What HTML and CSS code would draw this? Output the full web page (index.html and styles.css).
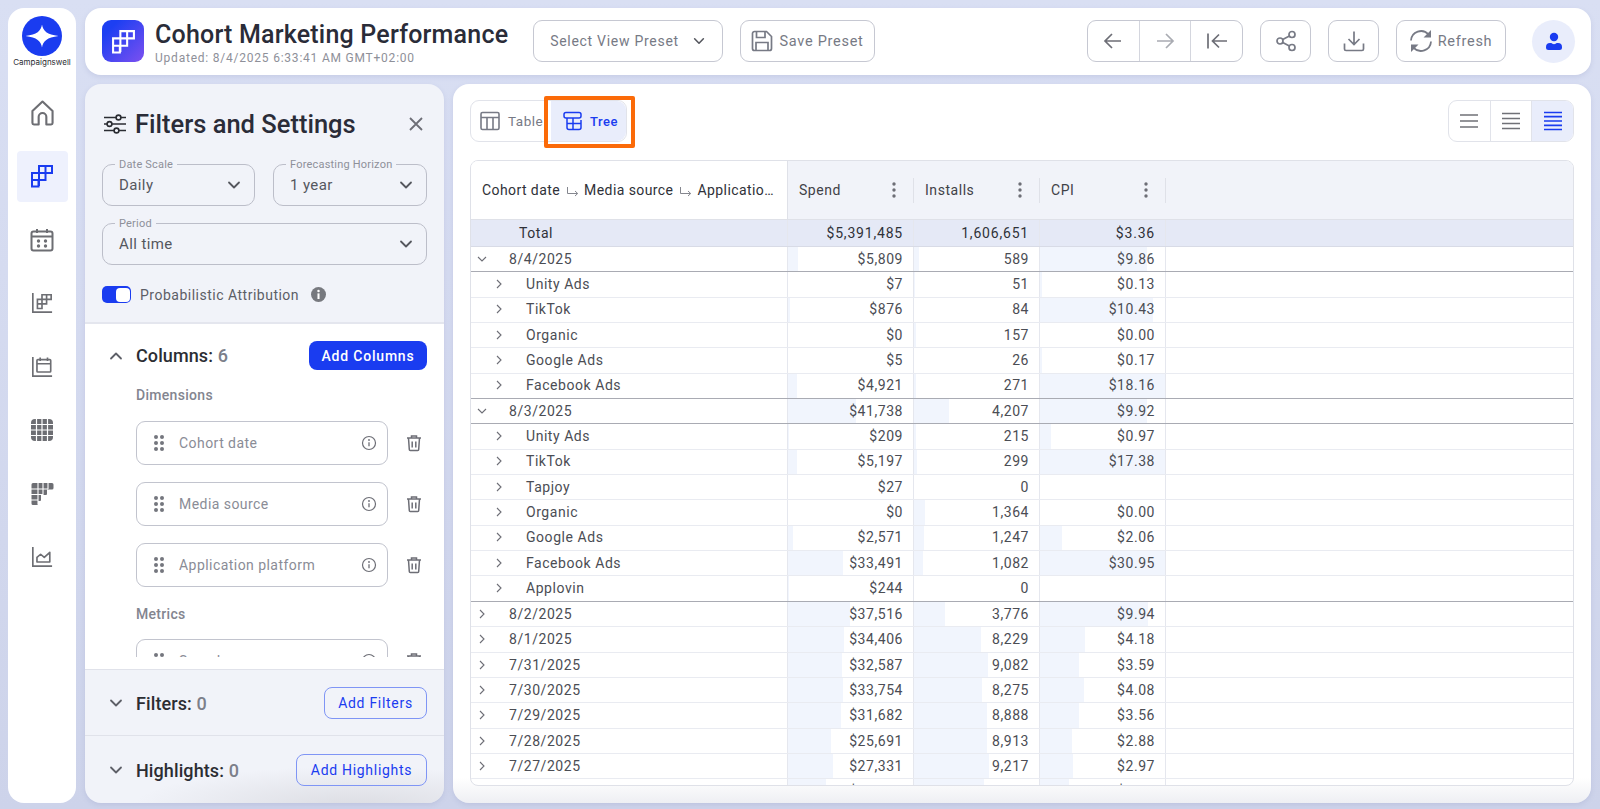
FILE: index.html
```html
<!DOCTYPE html>
<html lang="en">
<head>
<meta charset="utf-8">
<title>Cohort Marketing Performance</title>
<link rel="stylesheet" href="styles.css">
</head>
<body>
<svg class="defs" width="0" height="0" aria-hidden="true">
  <symbol id="stairs" viewBox="0 0 24 24"><path d="M9 2h13v7h-6.500v7H2V9h7zM15.500 2v7M9 9h6.500M9 9v7M2 16h6.500v6.500H2zM9 16v6" fill="none" stroke="currentColor" stroke-width="2"/></symbol>
  <symbol id="chev-d" viewBox="0 0 16 16"><path d="M3 5.500l5 5 5-5" fill="none" stroke="currentColor" stroke-width="1.800" stroke-linecap="round" stroke-linejoin="round"/></symbol>
  <symbol id="chev-r" viewBox="0 0 12 12"><path d="M4 2l4 4-4 4" fill="none" stroke="currentColor" stroke-width="1.100"/></symbol>
  <symbol id="chev-o" viewBox="0 0 12 12"><path d="M2 4l4 4 4-4" fill="none" stroke="currentColor" stroke-width="1.100"/></symbol>
  <symbol id="grip" viewBox="0 0 12 18"><g fill="currentColor"><circle cx="3" cy="3" r="2"/><circle cx="9" cy="3" r="2"/><circle cx="3" cy="9" r="2"/><circle cx="9" cy="9" r="2"/><circle cx="3" cy="15" r="2"/><circle cx="9" cy="15" r="2"/></g></symbol>
  <symbol id="info" viewBox="0 0 16 16"><circle cx="8" cy="8" r="6.500" fill="none" stroke="currentColor" stroke-width="1.200"/><path d="M8 7.200v4" stroke="currentColor" stroke-width="1.300"/><circle cx="8" cy="5" r=".9" fill="currentColor"/></symbol>
  <symbol id="trash" viewBox="0 0 18 18"><path d="M2 4h14M6.500 4V2h5v2M3.500 4l.8 11.500a1 1 0 0 0 1 1h7.400a1 1 0 0 0 1-1L14.500 4M7.200 7.500v6M10.800 7.500v6" fill="none" stroke="currentColor" stroke-width="1.500"/></symbol>
  <symbol id="kebab" viewBox="0 0 4 16"><g fill="currentColor"><circle cx="2" cy="2" r="1.700"/><circle cx="2" cy="8" r="1.700"/><circle cx="2" cy="14" r="1.700"/></g></symbol>
  <symbol id="turn" viewBox="0 0 14 12"><path d="M1.500 1v6.500h10M9 5l2.700 2.500L9 10" fill="none" stroke="currentColor" stroke-width="1"/></symbol>
</svg>
<div class="app">
  <nav class="rail">
    <div class="brand">
      <svg class="logo" viewBox="0 0 40 40"><circle cx="20" cy="20" r="20" fill="#1a3cf0"/><path d="M20 8.500C21 15 25 18.500 36.500 20 25 21.500 21 25 20 31.500 19 25 15 21.500 3.500 20 15 18.500 19 15 20 8.500z" fill="#fff"/></svg>
      <span class="brand-name">Campaignswell</span>
    </div>
    <ul class="rail-list">
      <li class="rail-item"><svg class="ic-home" viewBox="0 0 24 27"><path d="M1.500 11.500L12 1.500l10.500 10V24a1.500 1.500 0 0 1-1.500 1.500h-5v-8a4 4 0 0 0-8 0v8H3A1.500 1.500 0 0 1 1.500 24z" fill="none" stroke="currentColor" stroke-width="2.200" stroke-linejoin="round"/></svg></li>
      <li class="rail-item is-active"><svg viewBox="0 0 24 24"><use href="#stairs"/></svg></li>
      <li class="rail-item"><svg viewBox="0 0 24 24"><rect x="1.500" y="3.500" width="21" height="19" rx="2" fill="none" stroke="currentColor" stroke-width="2"/><path d="M1.500 8.500h21M7 1v4M17 1v4" stroke="currentColor" stroke-width="2"/><g fill="currentColor"><circle cx="8.500" cy="13" r="1.700"/><circle cx="15.500" cy="13" r="1.700"/><circle cx="8.500" cy="18" r="1.700"/><circle cx="15.500" cy="18" r="1.700"/></g></svg></li>
      <li class="rail-item"><svg class="ic-axis" viewBox="0 0 24 24"><path d="M2 1v21h21" fill="none" stroke="currentColor" stroke-width="1.800"/><path d="M12 3h10v5h-5v5H7V8h5zM17 3v5M12 8h5M12 8v5M7 13h5v5H7z" fill="none" stroke="currentColor" stroke-width="1.800"/></svg></li>
      <li class="rail-item"><svg class="ic-axis" viewBox="0 0 24 24"><path d="M2 1v21h21" fill="none" stroke="currentColor" stroke-width="1.800"/><rect x="6.500" y="4" width="15" height="13.500" rx="1" fill="none" stroke="currentColor" stroke-width="1.800"/><path d="M6.500 8.500h15M10 1.500v4M18 1.500v4" stroke="currentColor" stroke-width="1.800"/></svg></li>
      <li class="rail-item"><svg viewBox="0 0 24 24"><rect x="1" y="1" width="22" height="22" rx="4" fill="currentColor"/><path d="M1 6.500h22M1 12h22M1 17.500h22M6.500 1v22M12 1v22M17.500 1v22" stroke="#fff" stroke-width="1.200"/></svg></li>
      <li class="rail-item"><svg viewBox="0 0 24 24"><path d="M3 1h19a1.500 1.500 0 0 1 1.500 1.500V6a1.500 1.500 0 0 1-1.500 1.500h-5V12a1 1 0 0 1-1 1h-5v5a1 1 0 0 1-1 1H8v2.500A1.500 1.500 0 0 1 6.500 23H3a1.500 1.500 0 0 1-1.500-1.500v-19A1.500 1.500 0 0 1 3 1z" fill="currentColor"/><path d="M1 7h17M1 12.500h12M1 18h7M8 1v21M13 1v12M18 1v6" stroke="#fff" stroke-width="1.100"/></svg></li>
      <li class="rail-item"><svg class="ic-axis" viewBox="0 0 24 24"><path d="M2 1v21h21" fill="none" stroke="currentColor" stroke-width="1.800"/><path d="M6.500 17.500v-5l4-3.500 4 3.500 6-5.500v10.500z" fill="none" stroke="currentColor" stroke-width="1.800" stroke-linejoin="round"/></svg></li>
    </ul>
  </nav>

  <div class="main">
    <header class="topbar">
      <div class="app-icon"><svg viewBox="0 0 24 24"><use href="#stairs"/></svg></div>
      <div class="title-block">
        <h1 class="title">Cohort Marketing Performance</h1>
        <p class="updated">Updated: 8/4/2025 6:33:41 AM GMT+02:00</p>
      </div>
      <button class="btn btn-select">Select View Preset<svg class="ic-chev" viewBox="0 0 16 16"><use href="#chev-d"/></svg></button>
      <button class="btn btn-save"><svg class="ic-22" viewBox="0 0 22 22"><path d="M1.500 3.500a2 2 0 0 1 2-2h12l5 5v12a2 2 0 0 1-2 2h-15a2 2 0 0 1-2-2zM5.500 1.500v6h8.500v-6M5 20.500v-8h12v8" fill="none" stroke="currentColor" stroke-width="1.700"/></svg>Save Preset</button>
      <div class="spacer"></div>
      <div class="btn-group">
        <button class="seg"><svg class="ic-22" viewBox="0 0 22 22"><path d="M19 11H3M10 4l-7 7 7 7" fill="none" stroke="currentColor" stroke-width="1.700"/></svg></button>
        <button class="seg is-faint"><svg class="ic-22" viewBox="0 0 22 22"><path d="M3 11h16M12 4l7 7-7 7" fill="none" stroke="currentColor" stroke-width="1.700"/></svg></button>
        <button class="seg"><svg class="ic-22" viewBox="0 0 22 22"><path d="M21 11H6.500M13 4.500L6.500 11l6.500 6.500M2 3.500v15" fill="none" stroke="currentColor" stroke-width="1.700"/></svg></button>
      </div>
      <button class="btn btn-icon"><svg class="ic-22" viewBox="0 0 22 22"><circle cx="17" cy="4.500" r="3" fill="none" stroke="currentColor" stroke-width="1.700"/><circle cx="5" cy="11" r="3" fill="none" stroke="currentColor" stroke-width="1.700"/><circle cx="17" cy="17.500" r="3" fill="none" stroke="currentColor" stroke-width="1.700"/><path d="M7.700 9.500l6.700-3.600M7.700 12.500l6.700 3.600" stroke="currentColor" stroke-width="1.700"/></svg></button>
      <button class="btn btn-icon"><svg class="ic-22" viewBox="0 0 22 22"><path d="M11 1.500V14M5.500 9l5.500 5.500L16.500 9M1.500 13.500V19a1.500 1.500 0 0 0 1.500 1.500h16a1.500 1.500 0 0 0 1.500-1.500v-5.500" fill="none" stroke="currentColor" stroke-width="1.700"/></svg></button>
      <button class="btn btn-refresh"><svg class="ic-22" viewBox="0 0 22 22"><path d="M1 10.500A10 10 0 0 1 18.500 4.500M21 11.500A10 10 0 0 1 3.500 17.500" fill="none" stroke="currentColor" stroke-width="1.800"/><path d="M21 0v7.500h-7.500zM1 22v-7.500h7.500z" fill="currentColor"/></svg>Refresh</button>
      <div class="avatar"><svg viewBox="0 0 18 18"><circle cx="9" cy="4.500" r="4.200" fill="#1a3cf0"/><path d="M1 14.500a4 4 0 0 1 4-4h1.500c.7 1.500 4.300 1.500 5 0H13a4 4 0 0 1 4 4V15a2.500 2.500 0 0 1-2.500 2.500h-11A2.500 2.500 0 0 1 1 15z" fill="#1a3cf0"/></svg></div>
    </header>

    <div class="panels">
      <aside class="settings">
        <section class="settings-top">
          <div class="settings-head">
            <svg class="ic-sliders" viewBox="0 0 22 20"><path d="M0 3.500h12M17 3.500h5M0 10h3M8 10h14M0 16.500h10M15 16.500h7" stroke="currentColor" stroke-width="1.600"/><g fill="none" stroke="currentColor" stroke-width="1.600"><circle cx="14.500" cy="3.500" r="2.400"/><circle cx="5.500" cy="10" r="2.400"/><circle cx="12.500" cy="16.500" r="2.400"/></g></svg>
            <h2 class="settings-title">Filters and Settings</h2>
            <svg class="ic-close" viewBox="0 0 14 14"><path d="M1 1l12 12M13 1L1 13" stroke="currentColor" stroke-width="1.800"/></svg>
          </div>
          <div class="select-row">
            <div class="select"><span class="select-label">Date Scale</span>Daily<svg class="ic-chev" viewBox="0 0 16 16"><use href="#chev-d"/></svg></div>
            <div class="select"><span class="select-label">Forecasting Horizon</span>1 year<svg class="ic-chev" viewBox="0 0 16 16"><use href="#chev-d"/></svg></div>
          </div>
          <div class="select"><span class="select-label">Period</span>All time<svg class="ic-chev" viewBox="0 0 16 16"><use href="#chev-d"/></svg></div>
          <div class="switch-row">
            <span class="switch"><span class="switch-knob"></span></span>
            <span class="switch-label">Probabilistic Attribution</span>
            <svg class="ic-info-fill" viewBox="0 0 16 16"><circle cx="8" cy="8" r="8" fill="#77797f"/><rect x="6.900" y="6.800" width="2.200" height="6" fill="#fff"/><circle cx="8" cy="4.300" r="1.300" fill="#fff"/></svg>
          </div>
        </section>

        <section class="columns">
          <div class="acc-head">
            <svg class="ic-acc up" viewBox="0 0 16 16"><use href="#chev-d"/></svg>
            <span class="acc-title">Columns: <b>6</b></span>
            <button class="btn-primary">Add Columns</button>
          </div>
          <div class="columns-list">
            <h3 class="group-title">Dimensions</h3>
            <div class="field-row"><div class="field"><svg class="ic-grip"><use href="#grip"/></svg><span class="field-name">Cohort date</span><svg class="ic-info"><use href="#info"/></svg></div><svg class="ic-trash"><use href="#trash"/></svg></div>
            <div class="field-row"><div class="field"><svg class="ic-grip"><use href="#grip"/></svg><span class="field-name">Media source</span><svg class="ic-info"><use href="#info"/></svg></div><svg class="ic-trash"><use href="#trash"/></svg></div>
            <div class="field-row"><div class="field"><svg class="ic-grip"><use href="#grip"/></svg><span class="field-name">Application platform</span><svg class="ic-info"><use href="#info"/></svg></div><svg class="ic-trash"><use href="#trash"/></svg></div>
            <h3 class="group-title group-metrics">Metrics</h3>
            <div class="field-row"><div class="field"><svg class="ic-grip"><use href="#grip"/></svg><span class="field-name">Spend</span><svg class="ic-info"><use href="#info"/></svg></div><svg class="ic-trash"><use href="#trash"/></svg></div>
          </div>
        </section>

        <section class="acc-section">
          <svg class="ic-acc" viewBox="0 0 16 16"><use href="#chev-d"/></svg>
          <span class="acc-title">Filters: <b>0</b></span>
          <button class="btn-outline">Add Filters</button>
        </section>
        <section class="acc-section">
          <svg class="ic-acc" viewBox="0 0 16 16"><use href="#chev-d"/></svg>
          <span class="acc-title">Highlights: <b>0</b></span>
          <button class="btn-outline btn-wide">Add Highlights</button>
        </section>
      </aside>

      <main class="report">
        <div class="toolbar">
          <div class="view-toggle">
            <button class="view-btn"><svg class="ic-table" viewBox="0 0 20 20"><rect x="1" y="1.500" width="18" height="17" rx="1.500" fill="none" stroke="currentColor" stroke-width="1.600"/><path d="M1 6.500h18M7 6.500v12M13 6.500v12" stroke="currentColor" stroke-width="1.600"/></svg>Table</button>
            <button class="view-btn is-active"><svg class="ic-table" viewBox="0 0 20 20"><g fill="none" stroke="currentColor" stroke-width="1.500"><rect x="1" y="1.500" width="17" height="5.500" rx="2"/><path d="M4 7v9.500a2 2 0 0 0 2 2h10a2 2 0 0 0 2-2V9M4 12.500h14M10 7v11.500"/></g></svg>Tree</button>
            <span class="callout"></span>
          </div>
          <div class="density">
            <button class="density-btn"><svg viewBox="0 0 20 16"><path d="M1 2h18M1 8h18M1 14h18" stroke="currentColor" stroke-width="1.700"/></svg></button>
            <button class="density-btn"><svg viewBox="0 0 20 18"><path d="M1 1.500h18M1 6.500h18M1 11.500h18M1 16.500h18" stroke="currentColor" stroke-width="1.700"/></svg></button>
            <button class="density-btn is-active"><svg viewBox="0 0 20 20"><path d="M1 1.500h18M1 5.700h18M1 10h18M1 14.300h18M1 18.500h18" stroke="currentColor" stroke-width="1.700"/></svg></button>
          </div>
        </div>

        <div class="grid">
          <div class="row row-head">
            <div class="cell head-group"><span class="crumb">Cohort date</span><svg class="ic-turn"><use href="#turn"/></svg><span class="crumb">Media source</span><svg class="ic-turn"><use href="#turn"/></svg><span class="crumb crumb-last">Application platform</span></div>
            <div class="cell head-col"><span>Spend</span><svg class="ic-kebab"><use href="#kebab"/></svg></div>
            <div class="cell head-col"><span>Installs</span><svg class="ic-kebab"><use href="#kebab"/></svg></div>
            <div class="cell head-col"><span>CPI</span><svg class="ic-kebab"><use href="#kebab"/></svg></div>
            <div class="cell head-fill"></div>
          </div>
          <div class="row row-total">
            <div class="cell name">Total</div>
            <div class="cell num">$5,391,485</div><div class="cell num">1,606,651</div><div class="cell num">$3.36</div><div class="cell"></div>
          </div>

          <div class="row lvl0 open"><div class="cell name"><svg class="tw"><use href="#chev-o"/></svg>8/4/2025</div><div class="cell num bar" style="background-size:10px 100%">$5,809</div><div class="cell num bar" style="background-size:5px 100%">589</div><div class="cell num bar" style="background-size:107px 100%">$9.86</div><div class="cell"></div></div>
          <div class="row lvl1"><div class="cell name"><svg class="tw"><use href="#chev-r"/></svg>Unity Ads</div><div class="cell num">$7</div><div class="cell num bar" style="background-size:1px 100%">51</div><div class="cell num bar" style="background-size:2px 100%">$0.13</div><div class="cell"></div></div>
          <div class="row lvl1"><div class="cell name"><svg class="tw"><use href="#chev-r"/></svg>TikTok</div><div class="cell num bar" style="background-size:2px 100%">$876</div><div class="cell num">84</div><div class="cell num bar" style="background-size:113px 100%">$10.43</div><div class="cell"></div></div>
          <div class="row lvl1"><div class="cell name"><svg class="tw"><use href="#chev-r"/></svg>Organic</div><div class="cell num">$0</div><div class="cell num bar" style="background-size:2px 100%">157</div><div class="cell num">$0.00</div><div class="cell"></div></div>
          <div class="row lvl1"><div class="cell name"><svg class="tw"><use href="#chev-r"/></svg>Google Ads</div><div class="cell num">$5</div><div class="cell num">26</div><div class="cell num bar" style="background-size:2px 100%">$0.17</div><div class="cell"></div></div>
          <div class="row lvl1 last"><div class="cell name"><svg class="tw"><use href="#chev-r"/></svg>Facebook Ads</div><div class="cell num bar" style="background-size:9px 100%">$4,921</div><div class="cell num bar" style="background-size:2px 100%">271</div><div class="cell num bar" style="background-size:126px 100%">$18.16</div><div class="cell"></div></div>

          <div class="row lvl0 open"><div class="cell name"><svg class="tw"><use href="#chev-o"/></svg>8/3/2025</div><div class="cell num bar" style="background-size:68px 100%">$41,738</div><div class="cell num bar" style="background-size:35px 100%">4,207</div><div class="cell num bar" style="background-size:107px 100%">$9.92</div><div class="cell"></div></div>
          <div class="row lvl1"><div class="cell name"><svg class="tw"><use href="#chev-r"/></svg>Unity Ads</div><div class="cell num bar" style="background-size:1px 100%">$209</div><div class="cell num bar" style="background-size:2px 100%">215</div><div class="cell num bar" style="background-size:11px 100%">$0.97</div><div class="cell"></div></div>
          <div class="row lvl1"><div class="cell name"><svg class="tw"><use href="#chev-r"/></svg>TikTok</div><div class="cell num bar" style="background-size:9px 100%">$5,197</div><div class="cell num bar" style="background-size:3px 100%">299</div><div class="cell num bar" style="background-size:126px 100%">$17.38</div><div class="cell"></div></div>
          <div class="row lvl1"><div class="cell name"><svg class="tw"><use href="#chev-r"/></svg>Tapjoy</div><div class="cell num">$27</div><div class="cell num">0</div><div class="cell num"></div><div class="cell"></div></div>
          <div class="row lvl1"><div class="cell name"><svg class="tw"><use href="#chev-r"/></svg>Organic</div><div class="cell num">$0</div><div class="cell num bar" style="background-size:11px 100%">1,364</div><div class="cell num">$0.00</div><div class="cell"></div></div>
          <div class="row lvl1"><div class="cell name"><svg class="tw"><use href="#chev-r"/></svg>Google Ads</div><div class="cell num bar" style="background-size:5px 100%">$2,571</div><div class="cell num bar" style="background-size:10px 100%">1,247</div><div class="cell num bar" style="background-size:22px 100%">$2.06</div><div class="cell"></div></div>
          <div class="row lvl1"><div class="cell name"><svg class="tw"><use href="#chev-r"/></svg>Facebook Ads</div><div class="cell num bar" style="background-size:55px 100%">$33,491</div><div class="cell num bar" style="background-size:9px 100%">1,082</div><div class="cell num bar" style="background-size:126px 100%">$30.95</div><div class="cell"></div></div>
          <div class="row lvl1 last"><div class="cell name"><svg class="tw"><use href="#chev-r"/></svg>Applovin</div><div class="cell num bar" style="background-size:1px 100%">$244</div><div class="cell num">0</div><div class="cell num"></div><div class="cell"></div></div>

          <div class="row lvl0"><div class="cell name"><svg class="tw"><use href="#chev-r"/></svg>8/2/2025</div><div class="cell num bar" style="background-size:62px 100%">$37,516</div><div class="cell num bar" style="background-size:31px 100%">3,776</div><div class="cell num bar" style="background-size:108px 100%">$9.94</div><div class="cell"></div></div>
          <div class="row lvl0"><div class="cell name"><svg class="tw"><use href="#chev-r"/></svg>8/1/2025</div><div class="cell num bar" style="background-size:56px 100%">$34,406</div><div class="cell num bar" style="background-size:67px 100%">8,229</div><div class="cell num bar" style="background-size:45px 100%">$4.18</div><div class="cell"></div></div>
          <div class="row lvl0"><div class="cell name"><svg class="tw"><use href="#chev-r"/></svg>7/31/2025</div><div class="cell num bar" style="background-size:54px 100%">$32,587</div><div class="cell num bar" style="background-size:74px 100%">9,082</div><div class="cell num bar" style="background-size:39px 100%">$3.59</div><div class="cell"></div></div>
          <div class="row lvl0"><div class="cell name"><svg class="tw"><use href="#chev-r"/></svg>7/30/2025</div><div class="cell num bar" style="background-size:55px 100%">$33,754</div><div class="cell num bar" style="background-size:68px 100%">8,275</div><div class="cell num bar" style="background-size:44px 100%">$4.08</div><div class="cell"></div></div>
          <div class="row lvl0"><div class="cell name"><svg class="tw"><use href="#chev-r"/></svg>7/29/2025</div><div class="cell num bar" style="background-size:53px 100%">$31,682</div><div class="cell num bar" style="background-size:73px 100%">8,888</div><div class="cell num bar" style="background-size:39px 100%">$3.56</div><div class="cell"></div></div>
          <div class="row lvl0"><div class="cell name"><svg class="tw"><use href="#chev-r"/></svg>7/28/2025</div><div class="cell num bar" style="background-size:43px 100%">$25,691</div><div class="cell num bar" style="background-size:73px 100%">8,913</div><div class="cell num bar" style="background-size:32px 100%">$2.88</div><div class="cell"></div></div>
          <div class="row lvl0"><div class="cell name"><svg class="tw"><use href="#chev-r"/></svg>7/27/2025</div><div class="cell num bar" style="background-size:45px 100%">$27,331</div><div class="cell num bar" style="background-size:75px 100%">9,217</div><div class="cell num bar" style="background-size:33px 100%">$2.97</div><div class="cell"></div></div>
          <div class="row lvl0"><div class="cell name"><svg class="tw"><use href="#chev-r"/></svg>7/26/2025</div><div class="cell num bar" style="background-size:38px 100%">$22,140</div><div class="cell num bar" style="background-size:70px 100%">8,512</div><div class="cell num bar" style="background-size:29px 100%">$2.60</div><div class="cell"></div></div>
        </div>
      </main>
    </div>
  </div>
</div>
</body>
</html>
```

FILE: styles.css
```css
* { box-sizing: border-box; }
html, body { margin: 0; height: 100%; overflow: hidden; }
body {
  font-family: Roboto, "Liberation Sans", sans-serif;
  color: #2b2d33;
  background: linear-gradient(#d9dff3, #cdd3ea);
}
h1, h2, h3, p, ul { margin: 0; padding: 0; }
button { font: inherit; background: none; border: 0; padding: 0; color: inherit; }
svg { display: block; flex: none; }
.defs { position: absolute; }

.app {
  height: 809px;
  padding: 8px 9px 6px 8px;
  display: grid;
  grid-template-columns: 68px minmax(0, 1fr);
  grid-template-rows: minmax(0, 1fr);
  gap: 9px;
}

/* rail */
.rail { background: #fff; border-radius: 16px; padding-top: 8px; }
.brand { display: flex; flex-direction: column; align-items: center; }
.logo { width: 40px; height: 40px; }
.brand-name { font-family: Inter, Roboto, sans-serif; font-size: 8px; line-height: 10px; margin-top: 1px; color: #2b2d33; }
.rail-list { list-style: none; margin-top: 20px; display: flex; flex-direction: column; align-items: center; gap: 12.500px; }
.rail-item {
  width: 51px; height: 51px; border-radius: 4px;
  display: flex; align-items: center; justify-content: center;
  color: #6d6e73;
}
.rail-item svg { width: 24px; height: 24px; }
.rail-item .ic-home { width: 23px; height: 26px; }
.rail-item .ic-axis { width: 22px; height: 22px; }
.rail-item.is-active { background: #eef1fd; color: #1a3cf0; }

/* top bar */
.main { display: flex; flex-direction: column; gap: 9px; min-width: 0; min-height: 0; }
.topbar {
  height: 67px; flex: none; background: #fff; border-radius: 16px;
  display: flex; align-items: center; padding: 0 16px 1px 17px;
  box-shadow: 0 2px 5px rgba(120, 130, 180, .18);
}
.app-icon {
  width: 42px; height: 42px; border-radius: 9px;
  background: linear-gradient(135deg, #1d3ff2 20%, #7c50f0 100%);
  color: #fff; display: flex; align-items: center; justify-content: center;
}
.app-icon svg { width: 25px; height: 25px; }
.title-block { margin-left: 11px; width: 378px; padding-top: 3px; }
.title { font-size: 25px; line-height: 29px; font-weight: 500; color: #2a2c38; letter-spacing: .2px; white-space: nowrap; margin-bottom: 2px; }
.updated { font-size: 12px; line-height: 14px; color: #8e9099; letter-spacing: .78px; white-space: nowrap; }
.btn {
  height: 42px; border: 1px solid #c6c8d2; border-radius: 9px;
  display: flex; align-items: center; justify-content: center;
  font-size: 14px; letter-spacing: .72px; color: #777a85; background: #fff;
}
.btn-select { width: 190px; gap: 13px; }
.btn-select .ic-chev { width: 14px; height: 14px; color: #55575e; }
.btn-save { width: 135px; gap: 6px; margin-left: 17px; font-size: 14.500px; }
.ic-22 { width: 22px; height: 22px; }
.spacer { flex: 1; }
.btn-group { display: flex; width: 156px; height: 42px; border: 1px solid #c6c8d2; border-radius: 9px; }
.seg { flex: 1; display: flex; align-items: center; justify-content: center; color: #6d6e76; }
.seg + .seg { border-left: 1px solid #d4d6de; }
.seg.is-faint { color: #a9abb2; }
.btn-icon { width: 51px; margin-left: 17px; }
.btn-refresh { width: 110px; gap: 6px; margin-left: 17px; font-size: 14.500px; }
.avatar {
  width: 43px; height: 43px; margin-left: 26px; border-radius: 50%;
  background: #e9edfb; display: flex; align-items: center; justify-content: center;
}
.avatar svg { width: 18px; height: 21px; }

/* panels */
.panels { flex: 1; min-height: 0; display: flex; gap: 9px; }
.settings {
  width: 359px; flex: none; border-radius: 16px; overflow: hidden;
  background: #f1f3f9; display: flex; flex-direction: column;
  box-shadow: 0 2px 5px rgba(120, 130, 180, .18);
}
.settings-top { height: 240px; flex: none; padding: 0 17px; border-bottom: 2px solid #e4e6ee; }
.settings-head { height: 80px; display: flex; align-items: center; padding: 0 4px 0 2px; }
.ic-sliders { width: 22px; height: 20px; color: #2b2d33; }
.settings-title { font-size: 25.500px; font-weight: 500; margin-left: 9px; color: #2a2c38; white-space: nowrap; }
.ic-close { width: 14px; height: 14px; margin-left: auto; color: #6d6e76; }
.select-row { display: grid; grid-template-columns: 153px 154px; gap: 18px; margin-bottom: 17px; }
.select {
  position: relative; height: 42px; border: 1px solid #bcbec9; border-radius: 10px;
  display: flex; align-items: center; justify-content: space-between;
  padding: 0 12px 0 16px; font-size: 15px; letter-spacing: .4px; color: #55575e;
}
.select-label {
  position: absolute; left: 12px; top: -7px; padding: 0 4px;
  background: #f1f3f9; font-size: 11px; line-height: 13px; color: #8e9099; letter-spacing: .2px;
}
.select .ic-chev { width: 16px; height: 16px; color: #55575e; }
.switch-row { display: flex; align-items: center; margin-top: 21px; }
.switch { width: 29px; height: 17px; background: #1a3cf0; border-radius: 5px; padding: 1.500px 1.500px 1.500px 13.500px; }
.switch-knob { display: block; width: 14px; height: 14px; background: #fff; border-radius: 4px; }
.switch-label { margin-left: 9px; font-size: 14px; letter-spacing: .5px; color: #5c5e66; }
.ic-info-fill { width: 15px; height: 15px; margin-left: 12px; }

.columns { flex: 1; min-height: 0; background: #fff; padding: 17px 17px 12px 23px; display: flex; flex-direction: column; border-bottom: 1px solid #e0e2ea; }
.acc-head { display: flex; align-items: center; height: 29px; flex: none; }
.ic-acc { width: 16px; height: 16px; color: #5e6068; flex: none; }
.ic-acc.up { transform: rotate(180deg); }
.acc-title { margin-left: 12px; font-size: 18px; font-weight: 500; color: #2b2d33; letter-spacing: .1px; white-space: nowrap; }
.acc-title b { font-weight: 500; color: #7c7f8a; }
.btn-primary {
  margin-left: auto; width: 118px; height: 29px; border-radius: 8px; background: #1a3cf0; color: #fff;
  font-size: 14px; font-weight: 500; letter-spacing: .8px;
}
.columns-list { flex: 1; min-height: 0; overflow: hidden; padding-left: 28px; }
.group-title { font-size: 14px; font-weight: 500; color: #83858f; letter-spacing: .3px; line-height: 16px; margin-top: 17px; margin-bottom: 18px; }
.group-metrics { margin-top: 19px; margin-bottom: 17px; }
.field-row { display: flex; align-items: center; margin-bottom: 17px; }
.field {
  width: 252px; height: 44px; border: 1px solid #c2c4ce; border-radius: 9px;
  display: flex; align-items: center; padding: 0 10px 0 16px;
}
.ic-grip { width: 12px; height: 18px; color: #74767e; }
.field-name { margin-left: 14px; font-size: 14px; letter-spacing: .45px; color: #8a8c96; }
.ic-info { width: 16px; height: 16px; margin-left: auto; color: #6d6e76; }
.ic-trash { width: 18px; height: 18px; margin-left: 17px; color: #6d6e76; }

.acc-section { height: 66px; flex: none; display: flex; align-items: center; padding: 1px 17px 0 23px; border-bottom: 1px solid #e0e2ea; }
.acc-section:last-child { height: 67px; border-bottom: 0; background: radial-gradient(ellipse 220px 40px at 75% 105%, #dcdde3, transparent); }
.btn-outline {
  margin-left: auto; width: 103px; height: 31.500px; border: 1px solid #7f95f5; border-radius: 8px;
  color: #1a3cf0; font-size: 14px; letter-spacing: .7px;
}
.btn-wide { width: 131px; }

/* report */
.report {
  flex: 1; min-width: 0; min-height: 0; border-radius: 16px; padding: 16px 17px 17px;
  background: linear-gradient(#fff 96.500%, #eeeff3 100%);
  display: flex; flex-direction: column; gap: 18px;
  box-shadow: 0 2px 5px rgba(120, 130, 180, .18);
}
.toolbar { display: flex; justify-content: space-between; height: 42px; flex: none; }
.view-toggle { position: relative; display: flex; width: 157px; border: 1px solid #e1e3ea; border-radius: 9px; }
.view-btn {
  display: flex; align-items: center; gap: 8px; font-size: 13.500px; letter-spacing: .5px; color: #777a85;
  width: 80px; padding-left: 9px; overflow: hidden;
}
.view-btn.is-active { flex: 1; width: auto; padding-left: 12px; gap: 7px; background: #e9edfb; color: #1a3cf0; font-weight: 500; border-radius: 0 9px 9px 0; font-size: 13px; }
.ic-table { width: 20px; height: 20px; flex: none; }
.callout {
  position: absolute; left: 73px; top: -5px; width: 91px; height: 52px;
  border: 4px solid #fb6a08; border-radius: 2px; pointer-events: none;
}
.density { display: flex; width: 126px; border: 1px solid #e1e3ea; border-radius: 9px; overflow: hidden; }
.density-btn { flex: 1; display: flex; align-items: center; justify-content: center; color: #707177; }
.density-btn svg { width: 20px; height: 20px; }
.density-btn + .density-btn { border-left: 1px solid #e1e3ea; }
.density-btn.is-active { background: #e9edfb; color: #1a3cf0; }

/* grid */
.grid {
  flex: 1; min-height: 0; overflow: hidden; border: 1px solid #dfe1e8; border-radius: 8px;
  background: #fff; font-size: 14px; letter-spacing: .55px;
}
.row { display: grid; grid-template-columns: 317px 126px 126px 126px 1fr; height: 25.350px; border-bottom: 1px solid #e9ebf1; }
.cell { display: flex; align-items: center; min-width: 0; border-right: 1px solid #e5e7ee; white-space: nowrap; }
.cell:last-child { border-right: 0; }
.row-head { height: 59px; border-bottom: 1px solid #dfe1e8; background: #f1f3f9; }
.head-group { background: #fff; padding: 0 8px 0 11px; color: #2f3138; gap: 4px; border-right: 1px solid #dfe1e8; overflow: hidden; letter-spacing: .42px; }
.crumb { flex: none; }
.crumb-last { flex: 1; min-width: 0; overflow: hidden; text-overflow: ellipsis; }
.ic-turn { width: 14px; height: 12px; color: #85878f; margin: 3px 0 0 2px; }
.head-col { justify-content: space-between; padding: 0 18px 0 11px; border-right: 0; position: relative; color: #3f4147; }
.head-col::after { content: ""; position: absolute; right: 0; top: 17px; height: 25px; width: 1px; background: #dfe1e8; }
.ic-kebab { width: 4px; height: 16px; color: #6d6e76; }
.row-total { height: 27px; background: #e5e9f6; border-bottom: 1px solid #d8dbe6; color: #33353c; letter-spacing: .8px; }
.row-total .name { padding-left: 48px; letter-spacing: .55px; color: #2f3138; }
.row-total .num { color: #2f3138; }
.name { color: #4b4d54; }
.lvl0 .name { padding-left: 5px; }
.lvl1 .name { padding-left: 22px; }
.lvl1 .cell, .open .cell { padding-bottom: 1px; }
.tw { width: 12px; height: 12px; margin-right: 21px; color: #6d6e76; flex: none; }
.num { justify-content: flex-end; padding-right: 10px; color: #4b4d54; }
.bar { background-image: linear-gradient(#f1f5fd, #f1f5fd); background-repeat: no-repeat; background-position: left top; }
.open { border-bottom: 1px solid #a9abb3; }
.last { border-bottom: 1px solid #a9abb3; }
```
